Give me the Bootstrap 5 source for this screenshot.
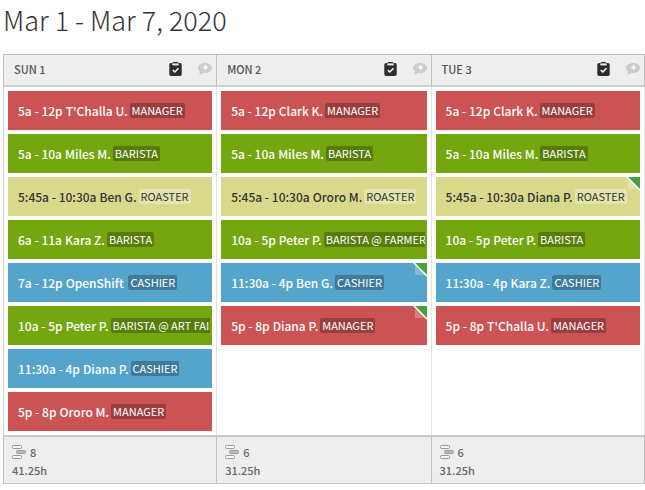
<!DOCTYPE html>
<html lang="en">
<head>
<meta charset="utf-8">
<meta name="viewport" content="width=device-width, initial-scale=1">
<title>Schedule</title>
<link href="https://cdn.jsdelivr.net/npm/bootstrap@5.3.0/dist/css/bootstrap.min.css" rel="stylesheet">
<style>
body { font-family: "Noto Sans CJK SC", "Open Sans", sans-serif; color: #333; background: #fff; padding-left: 3px; }
.week-title { font-size: 27px; line-height: 40px; font-weight: 300; color: #333; margin: 0 0 14px; }
.schedule { table-layout: fixed; width: 100%; border-collapse: separate; border-spacing: 0; }
.schedule th, .schedule td { border: 0 solid #c0c0c0; border-left-width: 1px; padding: 0; }
.schedule tr > :last-child { border-right-width: 1px; }
.schedule th:first-child { width: 33.2%; }
.schedule thead th { height: 33px; padding-bottom: 2px; border-top-width: 1px; border-bottom-width: 2px; border-bottom-color: #cfcfcf; background: #eee; }
.schedule tbody td { border-color: #e2e2e2; padding: 4px; vertical-align: top; }
.schedule tbody td:first-child { border-left-color: #d0d0d0; }
.schedule tfoot td { border-top: 2px solid #cbcbcb; border-bottom: 1px solid #c4c4c4; background: #eee; padding: 6px 8px 4px; }
.day-name { font-size: 11px; line-height: 16px; font-weight: 500; color: #555; padding-left: 10px; }
.icon-btn { border: 0; background: none; padding: 0; line-height: 0; }
.shift { height: 39px; padding: 0 2px 0 10px; font-size: 12px; line-height: 16px; font-weight: 500; color: #fff; position: relative; }
.who { margin: 0 2px 0 3px; }
.role-tag { font-size: 11px; line-height: 15px; font-weight: 400; padding: 0 2px; border-radius: 2px; background: rgba(0,0,0,.25); }
.red { background: #cb5354; }
.green { background: #74a610; }
.blue { background: #55a4cc; }
.sand { background: #d9d98c; color: #333; }
.sand .role-tag { background: rgba(255,255,255,.3); }
.corner { position: absolute; top: 0; right: 0; }
.totals { font-size: 11px; line-height: 18px; font-weight: 500; color: #666; }
</style>
<script src="https://cdn.jsdelivr.net/npm/bootstrap@5.3.0/dist/js/bootstrap.bundle.min.js"></script>
</head>
<body>
<svg width="0" height="0" class="position-absolute" aria-hidden="true">
  <symbol id="clipboard" viewBox="0 0 13 14">
    <path fill="#2d2d2d" d="M2 1h1.500q.3-1 1.500-1h3q1.200 0 1.500 1H11q1.700 0 1.700 1.700v9.600q0 1.700-1.700 1.700H2Q.3 14 .3 12.300V2.700Q.3 1 2 1z"/>
    <path fill="#eee" d="M3.300 1.400h6.400v2H3.300z"/>
    <path fill="none" stroke="#fff" stroke-width="1.500" d="M3.800 8l2 2L9.500 6.300"/>
  </symbol>
  <symbol id="comment" viewBox="0 0 14 12">
    <path fill="#ccc" d="M7 0c3.900 0 7 2.200 7 5s-3.100 5-7 5c-.6 0-1.200-.1-1.800-.2C4 11 2.300 11.800.6 11.800c.9-.8 1.500-1.800 1.500-3C.8 7.900 0 6.500 0 5c0-2.800 3.100-5 7-5z"/>
    <path fill="none" stroke="#fff" stroke-width="1.400" d="M7.500 2v5M5 4.500h5"/>
  </symbol>
  <symbol id="bars" viewBox="0 0 14 14">
    <g stroke="#999" fill="#f5f5f5"><rect x=".5" y=".5" width="9" height="3" rx="1"/><rect x="4.500" y="5.500" width="9" height="3" rx="1" fill="#bbb"/><rect x=".5" y="10.500" width="9" height="3" rx="1"/></g>
  </symbol>
  <symbol id="fold" viewBox="0 0 14 14">
    <path fill="#fff" fill-opacity=".25" d="M2 0v12h12z"/>
    <path fill="#48a23f" d="M1 0h13v13z"/>
    <path fill="none" stroke="#fff" stroke-width="1.500" d="M.5-.5l14 14"/>
  </symbol>
</svg>

<h1 class="week-title">Mar 1 - Mar 7, 2020</h1>
<table class="schedule">
  <thead>
    <tr id="days"></tr>
  </thead>
  <tbody>
    <tr id="shifts"></tr>
  </tbody>
  <tfoot>
    <tr id="totals"></tr>
  </tfoot>
</table>

<script>
const colors = { MANAGER: 'red', BARISTA: 'green', ROASTER: 'sand', CASHIER: 'blue' };
const days = [
  { name: 'SUN 1', hours: '41.25h', shifts: [
    ['5a - 12p', "T'Challa U.", 'MANAGER'], ['5a - 10a', 'Miles M.', 'BARISTA'],
    ['5:45a - 10:30a', 'Ben G.', 'ROASTER'], ['6a - 11a', 'Kara Z.', 'BARISTA'],
    ['7a - 12p', 'OpenShift&nbsp;', 'CASHIER'], ['10a - 5p', 'Peter P.', 'BARISTA @ ART FAIR'],
    ['11:30a - 4p', 'Diana P.', 'CASHIER'], ['5p - 8p', 'Ororo M.', 'MANAGER']] },
  { name: 'MON 2', hours: '31.25h', shifts: [
    ['5a - 12p', 'Clark K.', 'MANAGER'], ['5a - 10a', 'Miles M.', 'BARISTA'],
    ['5:45a - 10:30a', 'Ororo M.', 'ROASTER'], ['10a - 5p', 'Peter P.', 'BARISTA @ FARMERS'],
    ['11:30a - 4p', 'Ben G.', 'CASHIER', true], ['5p - 8p', 'Diana P.', 'MANAGER', true]] },
  { name: 'TUE 3', hours: '31.25h', shifts: [
    ['5a - 12p', 'Clark K.', 'MANAGER'], ['5a - 10a', 'Miles M.', 'BARISTA'],
    ['5:45a - 10:30a', 'Diana P.', 'ROASTER', true], ['10a - 5p', 'Peter P.', 'BARISTA'],
    ['11:30a - 4p', 'Kara Z.', 'CASHIER'], ['5p - 8p', "T'Challa U.", 'MANAGER']] }
];
const icon = (id, w, h, cls = '') => `<svg class="${cls}" width="${w}" height="${h}" aria-hidden="true"><use href="#${id}"/></svg>`;
document.getElementById('days').innerHTML = days.map(d => `
  <th scope="col"><div class="d-flex align-items-center pe-1">
    <span class="day-name me-auto">${d.name}</span>
    <button type="button" class="icon-btn me-3" aria-label="Tasks for ${d.name}">${icon('clipboard', 13, 14)}</button>
    <button type="button" class="icon-btn" aria-label="Add note to ${d.name}">${icon('comment', 14, 12)}</button>
  </div></th>`).join('');
document.getElementById('shifts').innerHTML = days.map(d => `
  <td><div class="d-grid gap-1">${d.shifts.map(([time, who, role, flagged]) => `
    <div class="shift ${colors[role.split(' ')[0]]} d-flex align-items-center overflow-hidden">
      <div class="d-flex align-items-center text-nowrap overflow-hidden"><span>${time}</span><span class="who">${who}</span><span class="role-tag">${role}</span></div>
      ${flagged ? icon('fold', 14, 14, 'corner') : ''}
    </div>`).join('')}</div></td>`).join('');
document.getElementById('totals').innerHTML = days.map(d => `
  <td><div class="totals">
    <div class="d-flex align-items-center gap-1">${icon('bars', 14, 14)}<span>${d.shifts.length}</span></div>
    <div>${d.hours}</div>
  </div></td>`).join('');
</script>
</body>
</html>
